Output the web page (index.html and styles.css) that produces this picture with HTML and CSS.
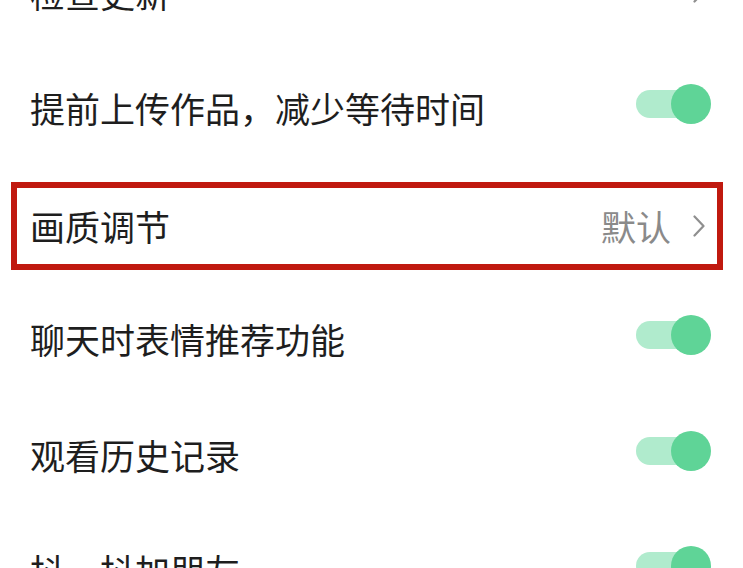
FILE: index.html
```html
<!DOCTYPE html>
<html lang="zh-CN">
<head>
<meta charset="utf-8">
<title>设置</title>
<link rel="stylesheet" href="styles.css">
</head>
<body>
<div class="list">
  <div class="row">
    <span class="label">检查更新</span>
    <svg class="chev" viewBox="0 0 12 22" width="12" height="22"><polyline points="1.5,1.5 10.5,11 1.5,20.5" fill="none" stroke="#8f8f8f" stroke-width="2.2" stroke-linecap="round" stroke-linejoin="round"/></svg>
  </div>
  <div class="row">
    <span class="label">提前上传作品，减少等待时间</span>
    <span class="toggle"><span class="track"></span><span class="knob"></span></span>
  </div>
  <div class="row row-hl">
    <div class="frame">
      <span class="label">画质调节</span>
      <span class="value">默认</span>
      <svg class="chev" viewBox="0 0 12 22" width="12" height="22"><polyline points="1.5,1.5 10.5,11 1.5,20.5" fill="none" stroke="#8f8f8f" stroke-width="2.2" stroke-linecap="round" stroke-linejoin="round"/></svg>
    </div>
  </div>
  <div class="row">
    <span class="label">聊天时表情推荐功能</span>
    <span class="toggle"><span class="track"></span><span class="knob"></span></span>
  </div>
  <div class="row">
    <span class="label">观看历史记录</span>
    <span class="toggle"><span class="track"></span><span class="knob"></span></span>
  </div>
  <div class="row">
    <span class="label">抖一抖加朋友</span>
    <span class="toggle"><span class="track"></span><span class="knob"></span></span>
  </div>
</div>
</body>
</html>
```
FILE: styles.css
```css
html, body {
  margin: 0;
  padding: 0;
  background: #ffffff;
  overflow: hidden;
}
body {
  width: 743px;
  height: 568px;
  font-family: "Noto Sans CJK SC", "Noto Sans", sans-serif;
  color: #1e1e1e;
}
.list {
  margin-top: -66px;
  display: flex;
  flex-direction: column;
}
.row {
  height: 115.5px;
  flex: none;
  display: flex;
  align-items: center;
  padding: 0 32px 0 30px;
  box-sizing: border-box;
}
.label {
  font-size: 35px;
  line-height: 40px;
  flex: 1;
  white-space: nowrap;
  padding-top: 2px;
}
.value {
  font-size: 35px;
  line-height: 40px;
  color: #8a8a8a;
  margin-right: 22px;
  padding-top: 2px;
}
.chev {
  display: block;
  flex: none;
  margin-right: 6px;
}
.row-hl {
  padding: 6px 20px 0 11px;
}
.frame {
  flex: 1;
  height: 88px;
  border: 6px solid #c0190f;
  box-sizing: border-box;
  display: flex;
  align-items: center;
  padding: 0 12px 0 13px;
}
.frame .chev {
  margin-right: 0;
}
.frame .label {
  padding-top: 0;
}
.frame .value {
  padding-top: 0;
}
.toggle {
  position: relative;
  width: 75px;
  height: 40px;
  flex: none;
  display: block;
  margin-top: -6px;
}
.track {
  position: absolute;
  left: 0;
  top: 6px;
  width: 64px;
  height: 28px;
  border-radius: 14px;
  background: #b0ebcd;
}
.knob {
  position: absolute;
  right: 0;
  top: 0;
  width: 40px;
  height: 40px;
  border-radius: 50%;
  background: #5fd497;
}
```
